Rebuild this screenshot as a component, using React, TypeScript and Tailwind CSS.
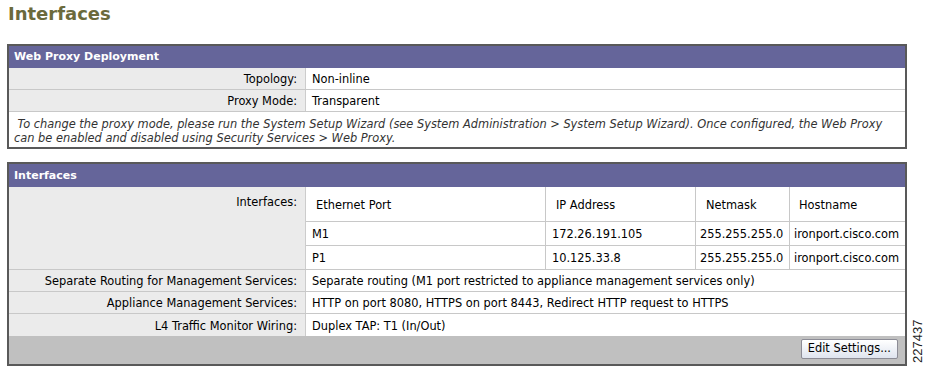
import React from 'react';

// Simple key/value row used in both panels
const Row: React.FC<{ label: string; children: React.ReactNode; last?: boolean }> = ({ label, children, last }) => (
  <div className={`grid grid-cols-[296px_1fr] h-[22px] ${last ? '' : 'border-b border-[#c8c8c8]'}`}>
    <div className="bg-[#ebebeb] text-right pr-[8px] pt-[3px] flex items-center justify-end">{label}</div>
    <div className="border-l border-[#cccccc] pl-[6px] pt-[3px] flex items-center">{children}</div>
  </div>
);

const PanelHeader: React.FC<{ title: string; h: string }> = ({ title, h }) => (
  <div className={`${h} bg-[#65659a] text-white text-[11px] font-bold px-[5px] pt-[1px] flex items-center`}>{title}</div>
);

const ports = [
  { port: 'M1', ip: '172.26.191.105', mask: '255.255.255.0', host: 'ironport.cisco.com' },
  { port: 'P1', ip: '10.125.33.8', mask: '255.255.255.0', host: 'ironport.cisco.com' },
];

const App: React.FC = () => {
  return (
    <div className="relative w-[928px] h-[373px] bg-white overflow-hidden text-[11.4px] text-black font-['DejaVu_Sans',Verdana,sans-serif]">
      {/* Page title */}
      <h1 className="h-[44px] pt-[3px] pl-[8px] text-[18px] leading-[21px] font-bold text-[#6b6a3c]">Interfaces</h1>

      {/* Web Proxy Deployment */}
      <div className="ml-[7px] w-[900px] border-2 border-[#595959]">
        <PanelHeader title="Web Proxy Deployment" h="h-[22px]" />
        <Row label="Topology:">Non-inline</Row>
        <Row label="Proxy Mode:">Transparent</Row>
        <div className="h-[35px] px-[5px] pt-[5px] italic leading-[14px] text-[#333333]">
          &nbsp;To change the proxy mode, please run the System Setup Wizard (see System Administration &gt; System Setup Wizard). Once configured, the Web Proxy
          <br />
          can be enabled and disabled using Security Services &gt; Web Proxy.
        </div>
      </div>

      {/* Interfaces */}
      <div className="mt-[13px] ml-[7px] w-[900px] border-2 border-[#595959]">
        <PanelHeader title="Interfaces" h="h-[23px]" />
        <div className="grid grid-cols-[296px_1fr] border-b border-[#c8c8c8]">
          <div className="bg-[#ebebeb] text-right pr-[8px] pt-[7px]">Interfaces:</div>
          <div className="border-l border-[#cccccc]">
            <div className="grid grid-cols-[239px_150px_94px_1fr] h-[35px] border-b border-[#c8c8c8]">
              <div className="pl-[10px] pt-[3px] flex items-center">Ethernet Port</div>
              <div className="pl-[10px] pt-[3px] flex items-center border-l border-[#c8c8c8]">IP Address</div>
              <div className="pl-[10px] pt-[3px] flex items-center border-l border-[#c8c8c8]">Netmask</div>
              <div className="pl-[9px] pt-[3px] flex items-center border-l border-[#c8c8c8]">Hostname</div>
            </div>
            {ports.map((p, i) => (
              <div
                key={p.port}
                className={`grid grid-cols-[239px_150px_94px_1fr] ${i === 0 ? 'h-[24px] border-b border-[#c8c8c8]' : 'h-[23px]'}`}
              >
                <div className="pl-[6px] pt-[3px] flex items-center">{p.port}</div>
                <div className="pl-[6px] pt-[3px] flex items-center border-l border-[#c8c8c8]">{p.ip}</div>
                <div className="pl-[4px] pt-[3px] flex items-center border-l border-[#c8c8c8]">{p.mask}</div>
                <div className="pl-[4px] pt-[3px] flex items-center border-l border-[#c8c8c8] whitespace-nowrap">{p.host}</div>
              </div>
            ))}
          </div>
        </div>
        <Row label="Separate Routing for Management Services:">
          Separate routing (M1 port restricted to appliance management services only)
        </Row>
        <Row label="Appliance Management Services:">
          HTTP on port 8080, HTTPS on port 8443, Redirect HTTP request to HTTPS
        </Row>
        <Row label="L4 Traffic Monitor Wiring:" last>
          Duplex TAP: T1 (In/Out)
        </Row>
        <div className="h-[28px] bg-[#c0c0c0] flex items-start justify-end pr-[7px] pt-[3px]">
          <button className="h-[20px] px-[6px] border border-[#8c8c96] rounded-[2px] bg-gradient-to-b from-white to-[#dfe4ef] text-[11.4px] text-black leading-none">
            Edit Settings...
          </button>
        </div>
      </div>

      {/* figure number */}
      <div className="absolute left-[911px] top-[317px] h-[46px] [writing-mode:vertical-rl] rotate-180 text-[13px] leading-[14px] text-[#222] font-['Liberation_Sans',Arial,sans-serif]">
        227437
      </div>
    </div>
  );
};

export default App;
